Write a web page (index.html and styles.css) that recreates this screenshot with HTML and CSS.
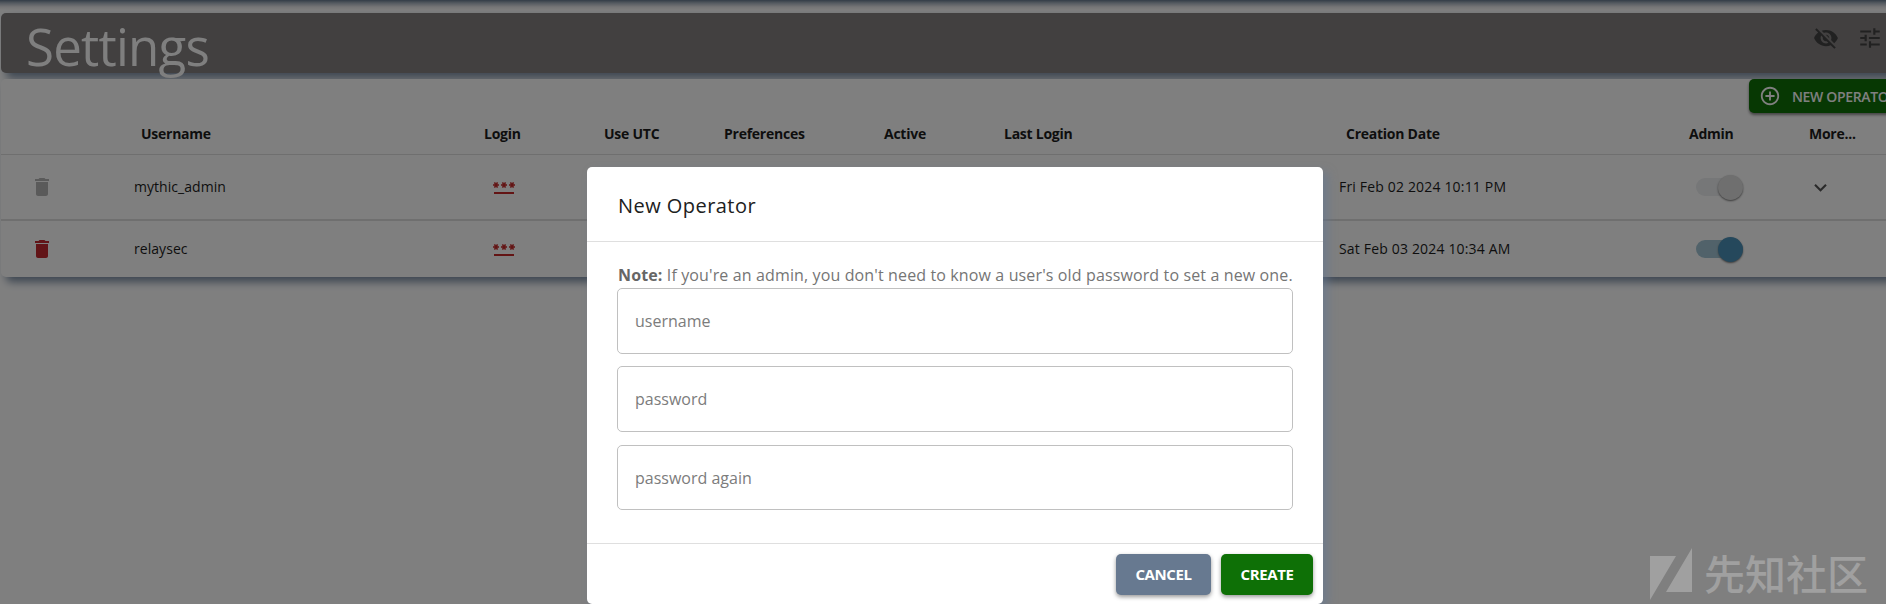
FILE: index.html
```html
<!DOCTYPE html>
<html lang="en">
<head>
<meta charset="utf-8">
<title>Settings</title>
<link rel="stylesheet" href="styles.css">
</head>
<body>
<div class="page">
  <div class="navbar"></div>
  <header class="titlebar">
    <h1 class="title">Settings</h1>
    <div class="tools">
      <svg class="icon26" viewBox="0 0 24 24"><path d="M12 7c2.76 0 5 2.24 5 5 0 .65-.13 1.26-.36 1.83l2.92 2.92c1.51-1.26 2.7-2.89 3.43-4.75-1.73-4.39-6-7.5-11-7.5-1.4 0-2.74.25-3.98.7l2.16 2.16C10.74 7.13 11.35 7 12 7zM2 4.27l2.28 2.28.46.46C3.08 8.3 1.78 10.02 1 12c1.73 4.39 6 7.5 11 7.5 1.55 0 3.03-.3 4.38-.84l.42.42L19.73 22 21 20.73 3.27 3 2 4.27zM7.53 9.8l1.55 1.55c-.05.21-.08.43-.08.65 0 1.66 1.34 3 3 3 .22 0 .44-.03.65-.08l1.55 1.55c-.67.33-1.41.53-2.2.53-2.76 0-5-2.24-5-5 0-.79.2-1.53.53-2.2zm4.31-.78 3.15 3.15.02-.16c0-1.66-1.34-3-3-3l-.17.01z"/></svg>
      <svg class="icon26" viewBox="0 0 24 24"><path d="M3 17v2h6v-2H3zM3 5v2h10V5H3zm10 16v-2h8v-2h-8v-2h-2v6h2zM7 9v2H3v2h4v2h2V9H7zm14 4v-2H11v2h10zm-6-4h2V7h4V5h-4V3h-2v6z"/></svg>
    </div>
  </header>
  <main class="panel">
    <div class="actions">
      <div class="new-btn">
        <svg class="plus" viewBox="0 0 24 24"><path d="M13 7h-2v4H7v2h4v4h2v-4h4v-2h-4V7zm-1-5C6.48 2 2 6.48 2 12s4.48 10 10 10 10-4.48 10-10S17.52 2 12 2zm0 18c-4.41 0-8-3.59-8-8s3.59-8 8-8 8 3.590 8 8-3.590 8-8 8z"/></svg>
        <span>NEW OPERATOR</span>
      </div>
    </div>
    <div class="row head">
      <div></div><div>Username</div><div>Login</div><div>Use UTC</div><div>Preferences</div><div>Active</div><div>Last Login</div><div>Creation Date</div><div>Admin</div><div>More...</div>
    </div>
    <div class="row first">
      <div class="del"><svg class="trash off" viewBox="0 0 24 24"><path d="M6 19c0 1.100.9 2 2 2h8c1.100 0 2-.9 2-2V7H6v12zM19 4h-3.500l-1-1h-5l-1 1H5v2h14V4z"/></svg></div>
      <div class="cell">mythic_admin</div>
      <div class="login"><svg class="pw" viewBox="0 0 24 24"><path d="M2 17h20v2H2v-2zm1.150-4.050L4 11.470l.85 1.480 1.300-.75-.85-1.480H7v-1.500H5.300l.85-1.470L4.850 7 4 8.470 3.150 7l-1.300.75.85 1.470H1v1.500h1.700l-.85 1.480 1.300.75zm6.700-.75 1.300.75.850-1.480.85 1.480 1.300-.75-.85-1.480H15v-1.500h-1.700l.85-1.470-1.300-.75L12 8.470 11.150 7l-1.300.75.850 1.470H9v1.500h1.700l-.85 1.480zM23 9.220h-1.700l.85-1.470-1.300-.75L20 8.470 19.150 7l-1.300.75.850 1.470H17v1.500h1.700l-.85 1.480 1.300.75.850-1.480.850 1.480 1.300-.75-.85-1.480H23v-1.500z"/></svg></div>
      <div></div><div></div><div></div><div></div>
      <div class="cell date">Fri Feb 02 2024 10:11 PM</div>
      <div class="admin"><span class="switch disabled"><i></i></span></div>
      <div class="more"><svg class="chev" viewBox="0 0 24 24"><path d="M16.590 8.590 12 13.170 7.410 8.590 6 10l6 6 6-6z"/></svg></div>
    </div>
    <div class="row">
      <div class="del"><svg class="trash" viewBox="0 0 24 24"><path d="M6 19c0 1.100.9 2 2 2h8c1.100 0 2-.9 2-2V7H6v12zM19 4h-3.500l-1-1h-5l-1 1H5v2h14V4z"/></svg></div>
      <div class="cell">relaysec</div>
      <div class="login"><svg class="pw" viewBox="0 0 24 24"><path d="M2 17h20v2H2v-2zm1.150-4.050L4 11.470l.85 1.480 1.300-.75-.85-1.480H7v-1.500H5.300l.85-1.470L4.850 7 4 8.470 3.150 7l-1.300.75.85 1.470H1v1.500h1.700l-.85 1.480 1.300.75zm6.700-.75 1.300.75.850-1.480.85 1.480 1.300-.75-.85-1.480H15v-1.500h-1.700l.85-1.470-1.300-.75L12 8.470 11.150 7l-1.300.75.850 1.470H9v1.500h1.700l-.85 1.480zM23 9.220h-1.700l.85-1.470-1.300-.75L20 8.470 19.150 7l-1.300.75.850 1.470H17v1.500h1.700l-.85 1.480 1.300.75.850-1.480.850 1.480 1.300-.75-.85-1.480H23v-1.500z"/></svg></div>
      <div></div><div></div><div></div><div></div>
      <div class="cell date">Sat Feb 03 2024 10:34 AM</div>
      <div class="admin"><span class="switch"><i></i></span></div>
      <div></div>
    </div>
  </main>
</div>
<div class="backdrop">
  <section class="dialog">
    <h2 class="dialog-title">New Operator</h2>
    <div class="dialog-body">
      <p class="note"><b>Note:</b> If you're an admin, you don't need to know a user's old password to set a new one.</p>
      <div class="field f1">username</div>
      <div class="field f2">password</div>
      <div class="field f3">password again</div>
    </div>
    <div class="dialog-actions">
      <button class="btn cancel">CANCEL</button>
      <button class="btn create">CREATE</button>
    </div>
  </section>
</div>
<div class="watermark">
  <svg class="mark" viewBox="0 0 42 52"><path d="M0 8h26L0 52zM42 0v44H16z"/></svg>
  <span>先知社区</span>
</div>
</body>
</html>
```

FILE: styles.css
```css
* { box-sizing: border-box; }
body {
  margin: 0;
  width: 1886px;
  height: 604px;
  overflow: hidden;
  position: relative;
  background: #fff;
  font-family: "Open Sans", "Noto Sans", sans-serif;
  color: #1c1c1c;
}
h1, h2, p { margin: 0; font-weight: 400; }
svg { display: block; flex: none; }
.page { width: 1912px; padding-left: 1px; }
.navbar { height: 13px; background: linear-gradient(#66788e, #a9b4c0 3px, #ececee 7px, #fff 10px); margin-left: -1px; }
.titlebar {
  height: 60px;
  display: flex;
  justify-content: space-between;
  background: #848081;
  border-radius: 5px;
  box-shadow: 5px 5px 8px #7b8da3;
}
.title {
  padding-left: 25px;
  font-size: 51px;
  line-height: 66px;
  letter-spacing: -.75px;
  color: #fff;
  white-space: nowrap;
}
.tools { display: flex; gap: 18px; padding: 12px 29px 0 0; }
.icon26 { width: 26px; height: 26px; fill: #424242; }
.panel {
  margin-top: 6px;
  height: 198px;
  position: relative;
  background: #fff;
  border-radius: 5px;
  box-shadow: 5px 5px 8px #7b8da3;
}
.title { position: relative; z-index: 1; }
.actions { height: 34px; display: flex; justify-content: flex-end; }
.new-btn {
  width: 163px;
  height: 34px;
  display: flex;
  align-items: center;
  gap: 11px;
  padding-left: 10px;
  border-radius: 5px;
  background: #0e7006;
  color: #fff;
  font-size: 14px;
  font-weight: 600;
  letter-spacing: -.35px;
  white-space: nowrap;
  box-shadow: 0 2px 3px #888;
}
.plus { width: 22px; height: 22px; fill: #fff; }
.row {
  display: grid;
  grid-template-columns: 124px 343px 120px 120px 160px 120px 342px 343px 120px 119px;
  height: 56px;
  align-items: center;
  font-size: 14px;
}
.head { height: 42px; border-bottom: 1px solid #dedede; font-weight: 700; letter-spacing: -.25px; }
.head > div { padding-left: 16px; white-space: nowrap; }
.first { height: 66px; border-bottom: 2px solid #dedede; }
.cell { padding: 0 0 2px 9px; white-space: nowrap; letter-spacing: .05px; }
.date { letter-spacing: .17px; }
.del { padding-left: 29px; }
.trash { width: 24px; height: 24px; fill: #c4282e; }
.trash.off { fill: #b5b5b5; }
.login { padding-left: 24px; }
.pw { width: 24px; height: 24px; fill: #c62828; }
.admin { padding-left: 23px; }
.switch {
  display: flex;
  align-items: center;
  justify-content: flex-end;
  width: 47px;
  height: 18px;
  border-radius: 9px;
  background: #a2c5d4;
}
.switch i { width: 25px; height: 25px; flex: none; border-radius: 50%; background: #4a90b8; box-shadow: 0 1px 2px #777; }
.switch.disabled { background: #eceef0; }
.switch.disabled i { background: #dedede; }
.more { padding-left: 15px; }
.chev { width: 25px; height: 25px; fill: #555; }

.backdrop {
  position: absolute;
  inset: 0;
  z-index: 2;
  display: flex;
  padding: 167px 0 0 587px;
  background: rgba(0, 0, 0, .5);
}
.dialog {
  width: 736px;
  height: 437px;
  flex: none;
  background: #fff;
  border-radius: 5px;
  box-shadow: 5px 5px 10px #64799490;
  color: #202020;
}
.dialog-title {
  height: 75px;
  padding-left: 31px;
  border-bottom: 1px solid #dfdfdf;
  font-size: 20px;
  line-height: 78px;
  font-weight: 500;
  letter-spacing: .45px;
}
.dialog-body { height: 302px; padding: 21px 30px 0; border-bottom: 1px solid #dfdfdf; }
.note { height: 25px; padding-left: 1px; font-size: 16px; line-height: 25px; letter-spacing: .13px; color: #757575; white-space: nowrap; }
.note b { font-weight: 700; color: #666; }
.field {
  height: 66px;
  margin-bottom: 12px;
  padding-left: 17px;
  border: 1px solid #c0c0c0;
  border-radius: 5px;
  font-size: 16px;
  line-height: 64px;
  color: #7c7c7c;
}
.f2 { margin-bottom: 13px; }
.f3 { height: 65px; }
.dialog-actions { display: flex; justify-content: flex-end; gap: 10px; padding: 10px 10px 0 0; }
.btn {
  height: 41px;
  padding: 0 0 2px;
  border: 0;
  border-radius: 5px;
  color: #fff;
  font: 700 15px "Open Sans", sans-serif;
  letter-spacing: -.4px;
  box-shadow: 0 2px 4px #999;
}
.cancel { width: 95px; background: #677990; }
.create { width: 92px; background: #0e7006; }

.watermark {
  position: absolute;
  z-index: 3;
  left: 1650px;
  top: 548px;
  display: flex;
  gap: 12px;
  color: #a0a0a0;
  font: 500 41px/49px "Noto Sans CJK SC", sans-serif;
  white-space: nowrap;
}
.mark { width: 42px; height: 52px; fill: #a0a0a0; }
```
